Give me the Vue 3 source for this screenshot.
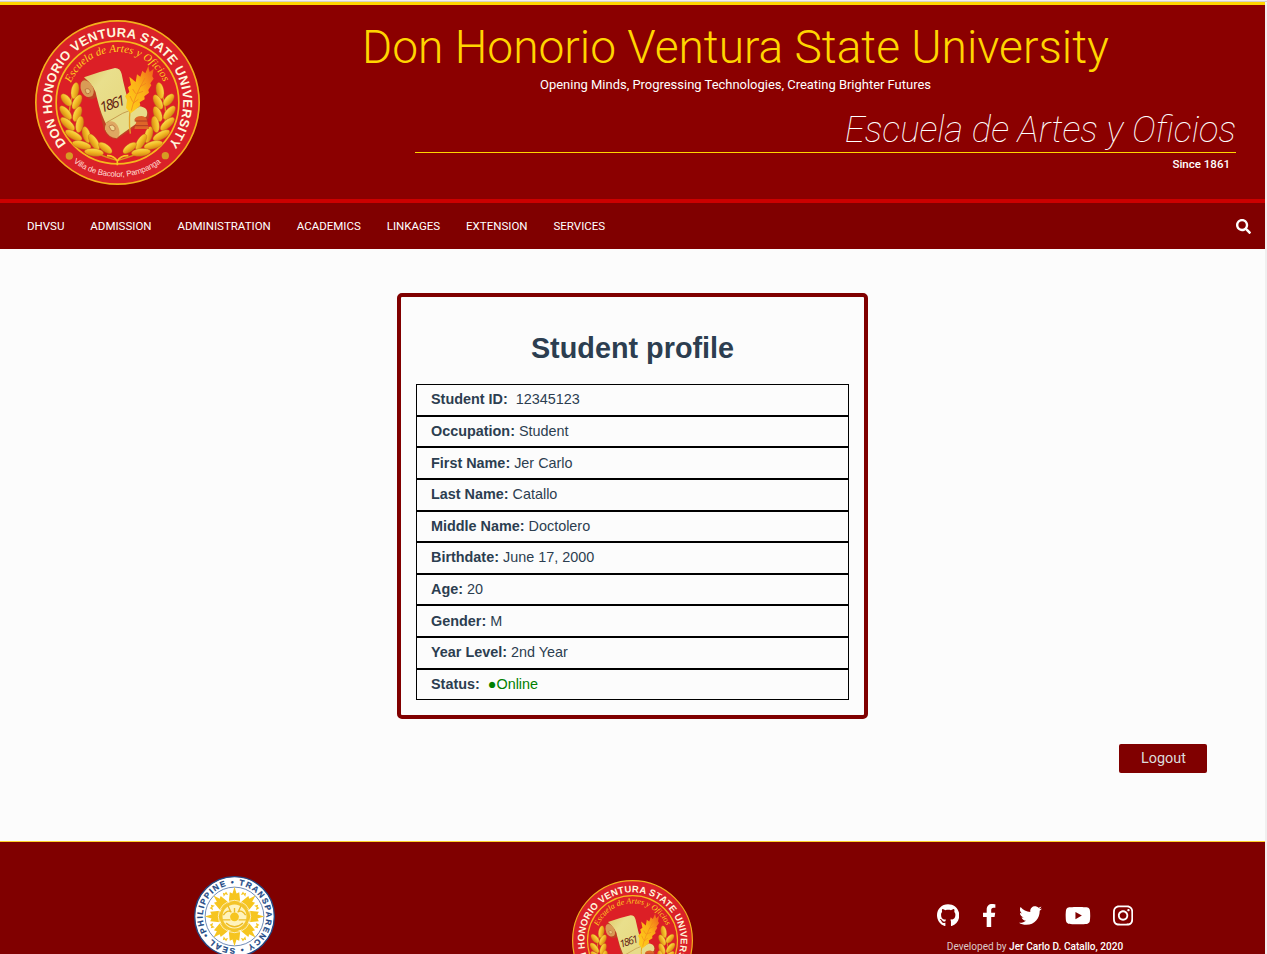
<script setup>
const navItems = ['DHVSU', 'ADMISSION', 'ADMINISTRATION', 'ACADEMICS', 'LINKAGES', 'EXTENSION', 'SERVICES']

const fields = [
  { label: 'Student ID:', value: '\u00a012345123' },
  { label: 'Occupation:', value: 'Student' },
  { label: 'First Name:', value: 'Jer Carlo' },
  { label: 'Last Name:', value: 'Catallo' },
  { label: 'Middle Name:', value: 'Doctolero' },
  { label: 'Birthdate:', value: 'June 17, 2000' },
  { label: 'Age:', value: '20' },
  { label: 'Gender:', value: 'M' },
  { label: 'Year Level:', value: '2nd Year' },
]

// Laurel leaves of the left branch: centre x, centre y, rotation, length
const leaves = [
  [150, 242, -80, 25], [124, 270, 50, 22], [156, 276, -62, 24],
  [122, 308, 50, 25], [157, 312, -68, 24], [128, 342, 42, 27],
  [164, 343, -80, 25], [146, 376, 28, 28], [184, 374, 74, 25],
  [170, 405, 14, 29], [207, 396, 58, 27], [207, 427, 6, 29], [241, 414, 36, 24],
]

const rays = [0, 45, 90, 135, 180, 225, 270, 315]

const socials = [
  { name: 'github', box: '0 0 496 512', w: 22.3, d: 'M165.900 397.400c0 2-2.300 3.600-5.200 3.600-3.300.3-5.600-1.300-5.600-3.600 0-2 2.300-3.600 5.200-3.600 3-.3 5.600 1.300 5.600 3.600zM244.800 8C106.100 8 0 113.300 0 252c0 110.900 69.800 205.800 169.500 239.200 12.800 2.300 17.300-5.600 17.300-12.100 0-6.200-.3-40.400-.3-61.400 0 0-70 15-84.700-29.800 0 0-11.400-29.100-27.800-36.600 0 0-22.900-15.700 1.600-15.400 0 0 24.900 2 38.600 25.800 21.900 38.600 58.600 27.500 72.900 20.900 2.300-16 8.800-27.100 16-33.700-55.900-6.200-112.300-14.300-112.300-110.500 0-27.500 7.600-41.300 23.600-58.900-2.600-6.500-11.100-33.300 2.600-67.900 20.900-6.500 69 27 69 27 20-5.600 41.500-8.500 62.800-8.500s42.800 2.900 62.800 8.500c0 0 48.100-33.600 69-27 13.700 34.700 5.200 61.400 2.600 67.900 16 17.700 25.800 31.500 25.800 58.900 0 96.500-58.900 104.200-114.800 110.500 9.200 7.900 17 22.900 17 46.400 0 33.700-.3 75.400-.3 83.600 0 6.500 4.600 14.400 17.300 12.100C428.200 457.800 496 362.900 496 252 496 113.300 383.500 8 244.800 8z' },
  { name: 'facebook', box: '0 0 320 512', w: 14.4, d: 'M279.140 288l14.220-92.660h-88.910v-60.130c0-25.350 12.420-50.060 52.240-50.060h40.420V6.260S260.430 0 225.360 0c-73.220 0-121.080 44.380-121.080 124.720v70.620H22.890V288h81.390v224h100.170V288z' },
  { name: 'twitter', box: '0 0 512 512', w: 23.04, d: 'M459.370 151.716c.325 4.548.325 9.097.325 13.645 0 138.720-105.583 298.558-298.558 298.558-59.452 0-114.680-17.219-161.137-47.106 8.447.974 16.568 1.299 25.340 1.299 49.055 0 94.213-16.568 130.274-44.832-46.132-.975-84.792-31.188-98.112-72.772 6.498.974 12.995 1.624 19.818 1.624 9.421 0 18.843-1.300 27.614-3.573-48.081-9.747-84.143-51.980-84.143-102.985v-1.299c13.969 7.797 30.214 12.670 47.431 13.319-28.264-18.843-46.781-51.005-46.781-87.391 0-19.492 5.197-37.360 14.294-52.954 51.655 63.675 129.300 105.258 216.365 109.807-1.624-7.797-2.599-15.918-2.599-24.040 0-57.828 46.782-104.934 104.934-104.934 30.213 0 57.502 12.670 76.670 33.137 23.715-4.548 46.456-13.320 66.599-25.340-7.798 24.366-24.366 44.833-46.132 57.827 21.117-2.273 41.584-8.122 60.426-16.243-14.292 20.791-32.161 39.308-52.628 54.253z' },
  { name: 'youtube', box: '0 0 576 512', w: 25.92, d: 'M549.655 124.083c-6.281-23.650-24.787-42.276-48.284-48.597C458.781 64 288 64 288 64S117.220 64 74.629 75.486c-23.497 6.322-42.003 24.947-48.284 48.597-11.412 42.867-11.412 132.305-11.412 132.305s0 89.438 11.412 132.305c6.281 23.650 24.787 41.500 48.284 47.821C117.220 448 288 448 288 448s170.780 0 213.371-11.486c23.497-6.321 42.003-24.171 48.284-47.821 11.412-42.867 11.412-132.305 11.412-132.305s0-89.438-11.412-132.305zm-317.510 213.508V175.185l142.739 81.205-142.739 81.201z' },
  { name: 'instagram', box: '0 0 448 512', w: 20.16, d: 'M224.100 141c-63.600 0-114.900 51.300-114.900 114.900s51.300 114.900 114.900 114.900S339 319.500 339 255.900 287.700 141 224.100 141zm0 189.600c-41.100 0-74.700-33.500-74.700-74.700s33.500-74.700 74.700-74.700 74.700 33.500 74.700 74.700-33.600 74.700-74.700 74.700zm146.400-194.300c0 14.900-12 26.800-26.800 26.800-14.900 0-26.800-12-26.800-26.800s12-26.800 26.800-26.800 26.800 12 26.800 26.800zm76.100 27.200c-1.700-35.900-9.900-67.700-36.200-93.900-26.200-26.200-58-34.400-93.900-36.200-37-2.100-147.900-2.100-184.900 0-35.800 1.700-67.600 9.900-93.900 36.100s-34.400 58-36.200 93.900c-2.100 37-2.100 147.900 0 184.900 1.700 35.900 9.900 67.700 36.200 93.900s58 34.400 93.900 36.200c37 2.100 147.900 2.100 184.900 0 35.900-1.700 67.700-9.900 93.900-36.200 26.200-26.200 34.400-58 36.200-93.900 2.100-37 2.100-147.800 0-184.800zM398.800 388c-7.800 19.600-22.900 34.700-42.600 42.600-29.500 11.700-99.500 9-132.100 9s-102.700 2.600-132.100-9c-19.600-7.800-34.700-22.900-42.600-42.600-11.700-29.500-9-99.500-9-132.100s-2.600-102.700 9-132.100c7.800-19.600 22.900-34.700 42.600-42.600 29.500-11.700 99.500-9 132.100-9s102.700-2.600 132.100 9c19.600 7.800 34.700 22.900 42.600 42.600 11.700 29.500 9 99.500 9 132.100s2.700 102.700-9 132.100z' },
]
</script>

<template>
  <div class="page">
    <svg class="defs" aria-hidden="true">
      <defs>
        <linearGradient id="leaf" x1="0" y1="0" x2="0" y2="1">
          <stop offset="0" stop-color="#fbe04d" />
          <stop offset=".55" stop-color="#efb21f" />
          <stop offset="1" stop-color="#d08516" />
        </linearGradient>
        <linearGradient id="feather" x1="0" y1="1" x2="1" y2="0">
          <stop offset="0" stop-color="#ffd21c" />
          <stop offset=".55" stop-color="#fbb016" />
          <stop offset="1" stop-color="#ee5a1c" />
        </linearGradient>
        <linearGradient id="paper" x1="0" y1="0" x2="1" y2="1">
          <stop offset="0" stop-color="#dfc968" />
          <stop offset=".3" stop-color="#e9df8c" />
          <stop offset="1" stop-color="#e6d67c" />
        </linearGradient>
        <path id="arc-name" d="M124.400 401.500A197 197 0 1 1 430.600 401.500" />
        <path id="arc-motto" d="M138 219A151 151 0 0 1 418 222" />
        <path id="arc-place" d="M145 457A223 223 0 0 0 411 456.500" />
        <path id="arc-seal" d="M80.800 200.500A93.700 93.700 0 0 1 245.200 109.500A93.700 93.700 0 0 1 80.800 200.500" />
        <g id="branch">
          <path d="M278 452C240 440 178 425 145 370C125 330 132 280 152 232" fill="none" stroke="#d99a1b" stroke-width="4" />
          <ellipse
            v-for="(leaf, i) in leaves" :key="i"
            :cx="leaf[0]" :cy="leaf[1]" :rx="leaf[3]" ry="11.500"
            :transform="`rotate(${leaf[2]} ${leaf[0]} ${leaf[1]})`"
            fill="url(#leaf)" stroke="#c5691a" stroke-width="1"
          />
        </g>
        <symbol id="crest" viewBox="30 30 495 495">
          <circle cx="277.500" cy="277.500" r="245" fill="#da2128" stroke="#f3b01c" stroke-width="5" />
          <circle cx="277.500" cy="277.500" r="184" fill="#dc1f26" stroke="#f6b81d" stroke-width="5" />
          <text class="crest-name"><textPath href="#arc-name" textLength="888">DON HONORIO VENTURA STATE UNIVERSITY</textPath></text>
          <text class="crest-motto"><textPath href="#arc-motto" textLength="352">Escuela de Artes y Oficios</textPath></text>
          <text class="crest-place"><textPath href="#arc-place" textLength="282">Villa de Bacolor, Pampanga</textPath></text>
          <circle cx="133" cy="438" r="11" fill="#d69b23" />
          <circle cx="421" cy="437" r="11" fill="#d69b23" />
          <use href="#branch" />
          <use href="#branch" transform="translate(555 0) scale(-1 1)" />
          <path d="M246 437Q266 436 277 453Q287 436 310 437M277 453V466" fill="none" stroke="#f8c623" stroke-width="5" />
          <path d="M168 215L176 250Q190 274 212 258Q222 310 234 356Q246 383 272 385L368 322Q372 288 343 290L315 300L282 174Q222 185 177 202Q165 207 168 215Z" fill="#a85c20" opacity=".55" transform="translate(3 3)" />
          <path d="M177 202Q222 185 270 174Q286 174 290 192Q299 240 318 298L248 352Q228 315 215 260Q211 230 177 202Z" fill="url(#paper)" />
          <path d="M168 218Q176 202 196 220Q213 240 202 258Q182 268 171 247Q164 232 168 218Z" fill="#d99b55" />
          <path d="M180 239Q190 231 196 243Q194 254 184 250Z" fill="#e9c27a" stroke="#a85c2a" stroke-width="2" />
          <path d="M244 338Q290 306 341 289Q373 291 365 319Q325 348 279 380Q249 382 240 356Z" fill="#e7dc89" />
          <path d="M244 338Q264 326 278 347Q290 369 276 385Q249 383 240 356Z" fill="#dfa762" />
          <path d="M252 349Q264 340 270 353Q271 366 259 361Z" fill="#f0d890" stroke="#a85c2a" stroke-width="2" />
          <path d="M244 338Q292 306 343 290" fill="none" stroke="#b77b30" stroke-width="2" />
          <text class="crest-year" transform="translate(230 308) rotate(-19)" textLength="78">1861</text>
          <path d="M328 330Q331 318 350 318Q365 320 366 331L372 357H328L334 335Z" fill="#de6528" />
          <path d="M329 333H370M330 347H370" stroke="#b13c23" stroke-width="3" />
          <path d="M316 371Q309 325 320 270L354 205" fill="none" stroke="#e3a328" stroke-width="4" />
          <path d="M317 310L303 294L306 270L300 258L313 246L309 232L318 225L313 200L332 216L336 193L346 200L352 182L361 190L370 168L374 186L386 176L382 199L386 206L376 220L379 226L370 240L372 248L358 259L359 268L344 277L346 286L329 301Z" fill="url(#feather)" />
          <path d="M319 302Q326 265 360 204M323 275L315 258M332 251L323 237M324 280L340 268M335 251L354 244M345 230L363 220" stroke="#f07b1d" stroke-width="2" fill="none" />
        </symbol>
        <symbol id="transparency" viewBox="43 35 240 240">
          <circle cx="163" cy="155" r="118" fill="#fff" stroke="#234a86" stroke-width="4" />
          <circle cx="163" cy="155" r="87" fill="#fff" stroke="#5777aa" stroke-width="2.500" />
          <text class="seal-text"><textPath href="#arc-seal" textLength="586">PHILIPPINE • TRANSPARENCY • SEAL •</textPath></text>
          <g fill="#f6c51f">
            <g v-for="a in rays" :key="a" :transform="`rotate(${a} 163 155)`">
              <path d="M146 112L149 83L157 87L163 67L169 87L177 83L180 112Z" />
              <path d="M156 89L158 77L163 81L168 77L170 89L163 84Z" transform="rotate(22.500 163 155)" />
            </g>
          </g>
          <circle cx="163" cy="155" r="40" fill="#fff3bd" stroke="#f3c42a" stroke-width="9" />
          <circle cx="163" cy="155" r="48" fill="none" stroke="#fff" stroke-width="2" />
          <circle cx="163" cy="156" r="13" fill="#f6c51f" />
          <path d="M130 151Q141 133 154 142M172 142Q185 133 196 151M128 165H151M175 165H198M138 174Q163 197 188 174M163 130V143M144 124L151 139M182 124L175 139" fill="none" stroke="#edbb25" stroke-width="4" />
        </symbol>
      </defs>
    </svg>

    <div class="window-edge"></div>
    <div class="site">
      <header class="masthead">
        <svg class="logo"><use href="#crest" /></svg>
        <div class="heading">
          <h1>Don Honorio Ventura State University</h1>
          <p class="tagline">Opening Minds, Progressing Technologies, Creating Brighter Futures</p>
          <div class="escuela">Escuela de Artes y Oficios</div>
          <div class="since">Since 1861</div>
        </div>
      </header>

      <nav>
        <a v-for="item in navItems" :key="item">{{ item }}</a>
        <svg class="search" viewBox="0 0 512 512"><path d="M505 442.700L405.300 343c-4.500-4.500-10.600-7-17-7H372c27.600-35.300 44-79.700 44-128C416 93.100 322.900 0 208 0S0 93.100 0 208s93.100 208 208 208c48.300 0 92.700-16.400 128-44v16.300c0 6.400 2.500 12.500 7 17l99.700 99.700c9.400 9.400 24.600 9.400 33.900 0l28.300-28.300c9.400-9.400 9.400-24.600.1-34zM208 336c-70.700 0-128-57.200-128-128 0-70.700 57.200-128 128-128 70.700 0 128 57.200 128 128 0 70.700-57.200 128-128 128z" /></svg>
      </nav>

      <main>
        <section class="card">
          <h2>Student profile</h2>
          <ul>
            <li v-for="f in fields" :key="f.label"><span><b>{{ f.label }}</b> {{ f.value }}</span></li>
            <li><span><b>Status:</b> &nbsp;<span class="online">●Online</span></span></li>
          </ul>
        </section>
        <button>Logout</button>
      </main>

      <footer>
        <div class="col"><svg class="seal"><use href="#transparency" /></svg></div>
        <div class="col"><svg class="logo-small"><use href="#crest" /></svg></div>
        <div class="col credits">
          <div class="social">
            <svg v-for="s in socials" :key="s.name" :viewBox="s.box" :width="s.w" height="23.04"><path :d="s.d" /></svg>
          </div>
          <p>Developed by <b>Jer Carlo D. Catallo, 2020</b></p>
        </div>
      </footer>
    </div>
  </div>
</template>

<style>
body {
  margin: 0;
  overflow: hidden;
  background: #f0f0f0;
}
</style>

<style scoped>
.page {
  width: 1267px;
  height: 954px;
  overflow: hidden;
  font-family: Roboto, sans-serif;
}
.defs {
  position: absolute;
  width: 0;
  height: 0;
}
.window-edge {
  height: 1px;
  background: #f0f0f0;
  border-bottom: 1px solid #d4d0c8;
}
.site {
  width: 1265px;
  background: #fcfcfc;
}
.masthead {
  box-sizing: border-box;
  height: 201px;
  display: flex;
  background: #8b0000;
  border-top: 3px solid #ffd500;
  border-bottom: 4px solid #cc0000;
  padding: 15px 29px 0 35px;
}
.logo {
  width: 165px;
  height: 165px;
  flex: none;
}
.heading {
  flex: 1;
  padding-left: 35px;
  display: flex;
  flex-direction: column;
}
h1 {
  margin: 0;
  color: #ffd500;
  font-size: 46.080px;
  line-height: 54px;
  font-weight: 300;
  text-align: center;
  white-space: nowrap;
}
.tagline {
  margin: 2px 0 0;
  color: #fff;
  font-size: 12.960px;
  line-height: 18px;
  text-align: center;
}
.escuela {
  box-sizing: border-box;
  width: 821px;
  height: 45px;
  margin-top: 14px;
  align-self: flex-end;
  border-bottom: 1px solid #ffd500;
  color: #fff;
  font-size: 36.400px;
  line-height: 43px;
  font-style: italic;
  font-weight: 100;
  text-align: right;
}
.since {
  margin: 4px 6px 0 0;
  color: #fff;
  font-size: 11.520px;
  line-height: 15px;
  font-weight: 500;
  text-align: right;
}
nav {
  height: 46px;
  display: flex;
  align-items: center;
  gap: 25.920px;
  padding: 0 14px 0 27px;
  background: #800000;
  color: #fff;
  font-size: 11.520px;
}
.search {
  width: 15px;
  height: 15px;
  margin-left: auto;
  fill: #fff;
}
main {
  box-sizing: border-box;
  height: 592px;
  padding-top: 44px;
  display: flex;
  flex-direction: column;
  align-items: center;
}
.card {
  box-sizing: border-box;
  width: 471px;
  height: 426px;
  border: 4px solid #800000;
  border-radius: 5px;
  padding: 0 15px;
  color: #2c3e50;
  font-family: "Liberation Sans", Arial, sans-serif;
}
h2 {
  margin: 33px 0 18.100px;
  font-size: 28.800px;
  line-height: 36px;
  text-align: center;
}
ul {
  margin: 0;
  padding: 0;
  list-style: none;
}
li {
  box-sizing: border-box;
  height: 31.620px;
  padding: .350px 0 0 14px;
  border: 1px solid #000;
  font-size: 14.400px;
  line-height: 29px;
}
.online {
  color: #008000;
}
button {
  width: 88px;
  height: 29px;
  margin: 25px 58px 0 0;
  padding: 0 0 0 1px;
  align-self: flex-end;
  border: 0;
  border-radius: 2px;
  background: #800000;
  color: #dcdcdc;
  font: 14.400px Roboto, sans-serif;
}
footer {
  height: 112px;
  display: grid;
  grid-template-columns: 434px 397px 434px;
  background: #800000;
  border-top: 1px solid #ffd02a;
}
.col {
  display: flex;
  justify-content: center;
}
.seal {
  width: 81px;
  height: 81px;
  margin: 34px 0 0 35px;
}
.logo-small {
  width: 121px;
  height: 121px;
  margin-top: 38px;
}
.credits {
  flex-direction: column;
  align-items: center;
  justify-content: flex-start;
  padding-right: 26px;
}
.social {
  display: flex;
  gap: 22.800px;
  margin-top: 61.500px;
}
.social svg {
  fill: #fff;
}
.credits p {
  margin: 13px 0 0;
  font-size: 10.080px;
  line-height: 14px;
  color: #dcc8c8;
}
.credits b {
  font-weight: 500;
  color: #fff;
}
.crest-name {
  font: bold 39px "Liberation Sans", sans-serif;
  fill: #fff6dc;
}
.crest-motto {
  font: italic 33px "Liberation Serif", serif;
  fill: #ffd21f;
}
.crest-place {
  font: 24px "Liberation Sans", sans-serif;
  fill: #ffdcd0;
}
.crest-year {
  font: italic 43px "Open Sans", sans-serif;
  fill: #641c12;
}
.seal-text {
  font: bold 24px "Liberation Sans", sans-serif;
  fill: #234a86;
  stroke: #234a86;
  stroke-width: .6px;
}
</style>
